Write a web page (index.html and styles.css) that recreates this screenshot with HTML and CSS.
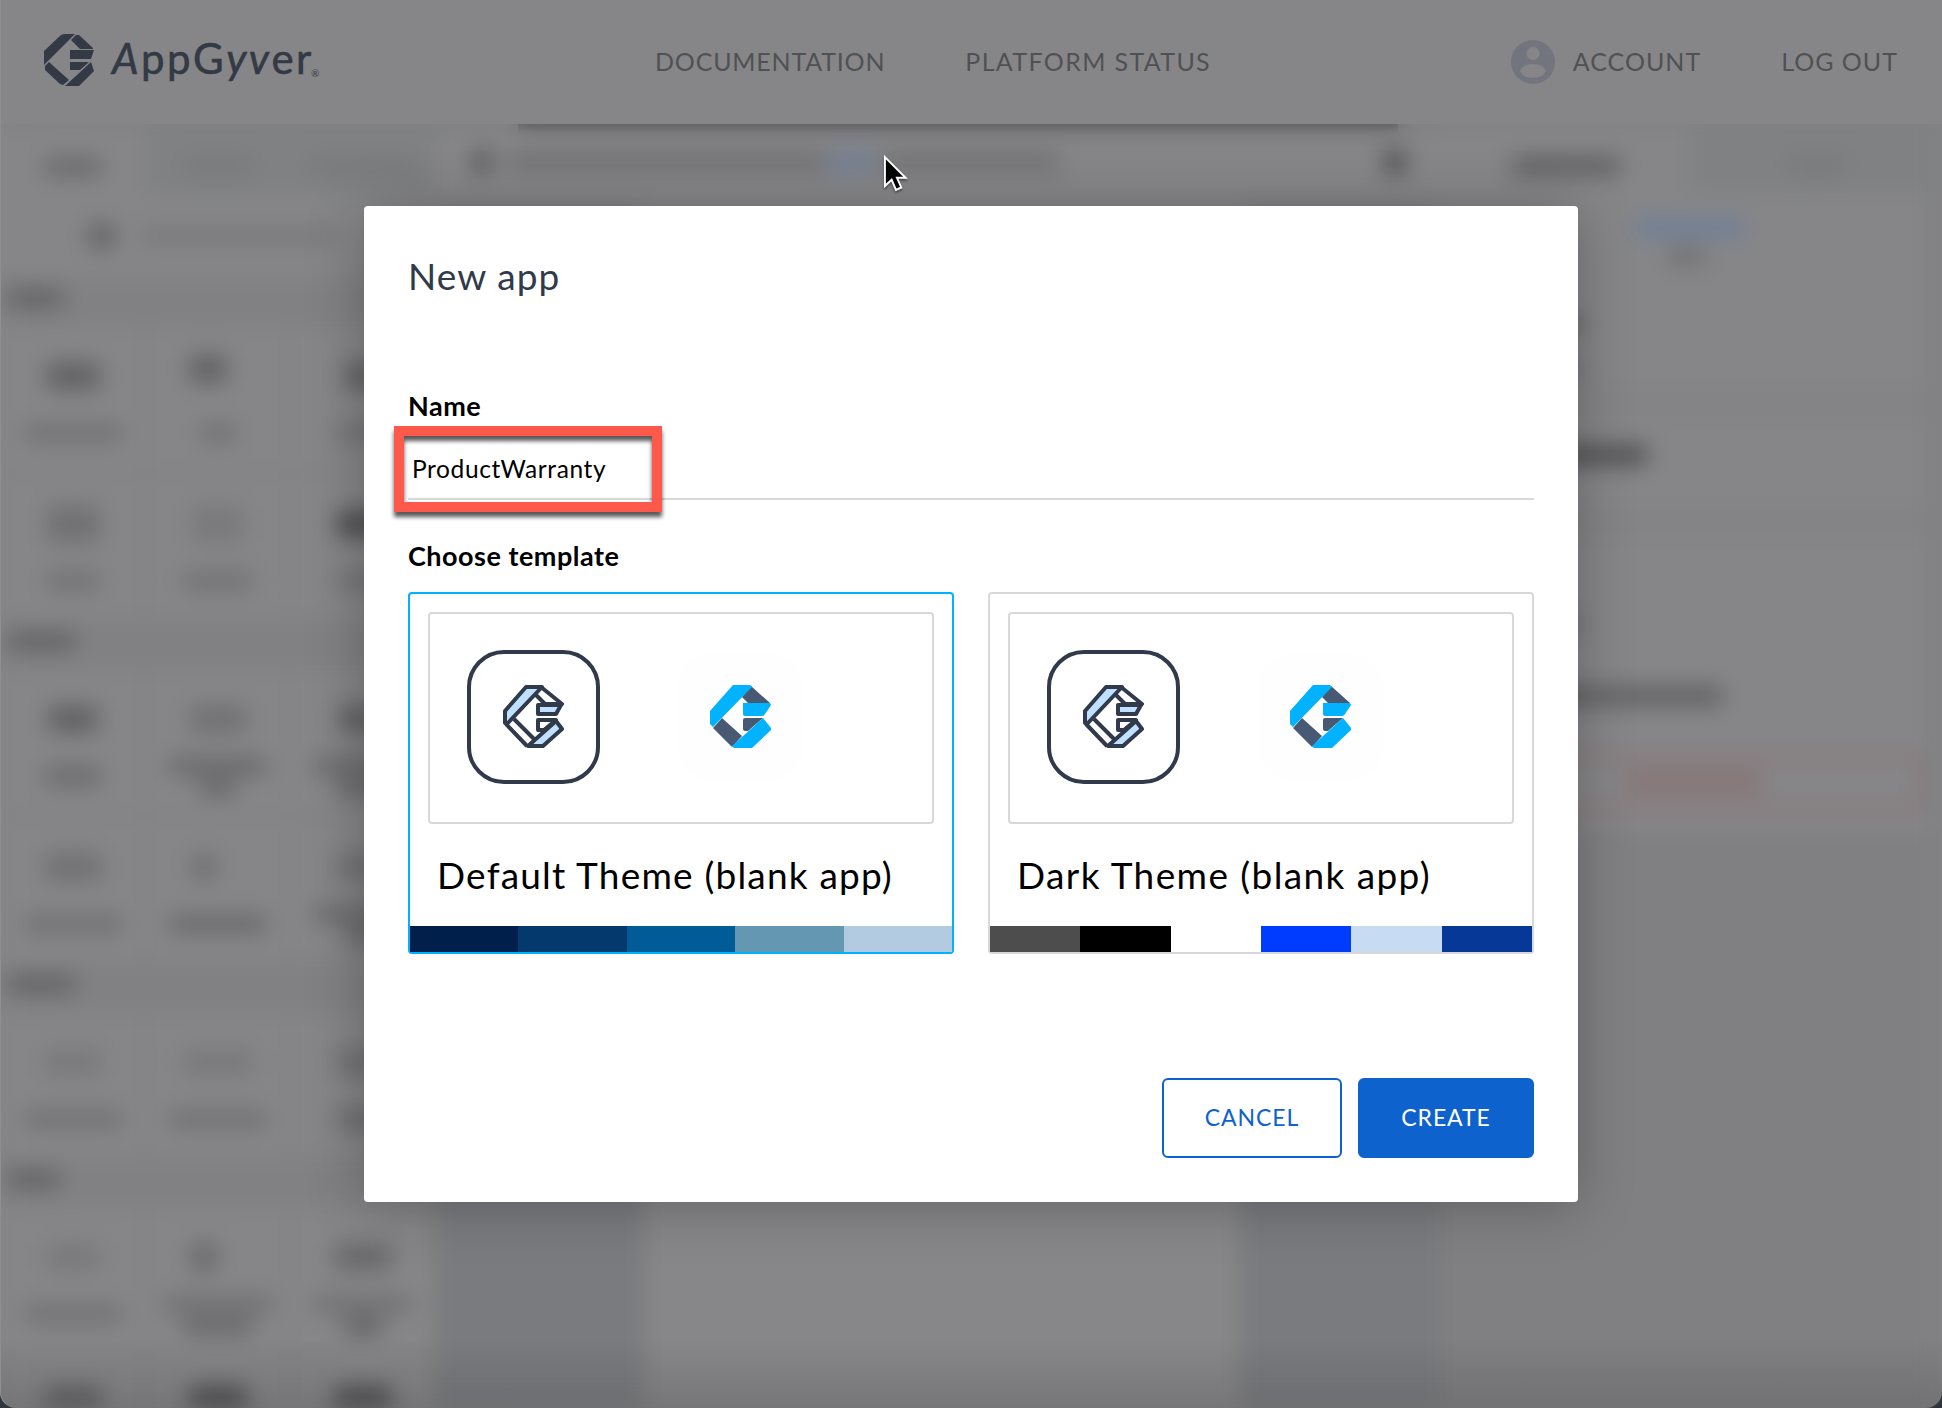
FILE: index.html
```html
<!DOCTYPE html>
<html lang="en">
<head>
<meta charset="utf-8">
<title>AppGyver – New app</title>
<link rel="stylesheet" href="styles.css">
</head>
<body>
<svg class="defs" aria-hidden="true">
  <symbol id="mark-color" viewBox="0 0 61 63">
    <path fill="#485a73" d="M41 1 60 18H38L32 12ZM12 33 32 51 22 62 3 43ZM33 35Q33 33 35 33H53L38 46H35Q33 46 33 44Z"/>
    <path fill="#00b2ff" d="M0 26 23 0H40L42 2 3 42 0 39ZM33 18H60L61 20 55 29Q54 31 52 31H35Q33 31 33 29ZM53 33 61 43V45L42 63H24L22 61Z"/>
  </symbol>
  <symbol id="mark-outline" viewBox="0 0 61 63">
    <g stroke="#313a4b" stroke-width="4" stroke-linejoin="round" fill="none">
      <path d="M38 2 59 19H42L33 10M11 34 31 54M3 39 24 61"/>
      <path fill="#bfe0ff" d="M2 26 23 2H39L4 39 2 38Z"/>
      <path fill="#bfe0ff" d="M35 20H58L53 29H35Z"/>
      <path d="M35 35H53L41 45H35Z"/>
      <path fill="#bfe0ff" d="M53 36 59 44 40 61H25Z"/>
    </g>
  </symbol>
</svg>

<header class="topbar">
  <a class="brand">
    <svg class="brand-mark" viewBox="0 0 50 52"><path d="M0 17 17 1 20 0H31L0 31ZM27 6 32 1H35L49 14V15H36ZM26 16H50L47 25H26ZM26 28H45L36 36H26ZM47 28 50 37 35 52H21ZM1 32 5 28 25 46 19 51 16 50 1 36Z"/></svg>
    <span class="brand-name"><i>A</i>ppG<i>y</i><i>v</i>er</span><span class="reg">®</span>
  </a>
  <nav class="links"><a class="docs">DOCUMENTATION</a><a class="status">PLATFORM STATUS</a></nav>
  <nav class="user">
    <a class="account"><svg class="avatar" viewBox="0 0 44 44"><circle cx="22" cy="22" r="22"/><circle class="hole" cx="22" cy="13.500" r="6.500"/><path class="hole" d="M9 31Q12 24 22 24T35 31Q32 38 22 38T9 31Z"/></svg><span>ACCOUNT</span></a>
    <a>LOG OUT</a>
  </nav>
</header>

<main class="editor" aria-hidden="true">
  <aside class="palette">
    <div class="tabs"><span class="tab on"><i class="s w60 d2"></i></span><span class="tab"><i class="s w70"></i></span><span class="tab"><i class="s w110"></i></span></div>
    <div class="search"><i class="s w26 h24 d3"></i><i class="s w200"></i></div>
    <div class="group"><i class="s w60 d3"></i></div>
    <div class="tiles">
      <div class="tile"><i class="s w56 h28 d3"></i><i class="s w100 d1"></i></div>
      <div class="tile"><i class="s w36 h28 d3 up"></i><i class="s w36 d1"></i></div>
      <div class="tile"><i class="s w36 h28 d3"></i><i class="s w56 d1"></i></div>
      <div class="tile"><i class="s w56 h40 d1"></i><i class="s w56 d1"></i></div>
      <div class="tile"><i class="s w56 h40"></i><i class="s w70 d1"></i></div>
      <div class="tile"><i class="s w56 h28 d4"></i><i class="s w56 d1"></i></div>
    </div>
    <div class="group"><i class="s w70 d3"></i></div>
    <div class="tiles">
      <div class="tile"><i class="s w50 h28 d3"></i><i class="s w60 d2"></i></div>
      <div class="tile"><i class="s w60 h28 d1"></i><i class="s w100 d2 first"></i><i class="s w36 d2 second"></i></div>
      <div class="tile"><i class="s w50 h28 d3"></i><i class="s w100 d2 first"></i><i class="s w56 d2 second"></i></div>
      <div class="tile"><i class="s w60 h28 d1"></i><i class="s w100 d1"></i></div>
      <div class="tile"><i class="s w26 h28 d1 left"></i><i class="s w100 d2"></i></div>
      <div class="tile"><i class="s w56 h28 d1"></i><i class="s w100 d2 first"></i><i class="s w36 d2 second"></i></div>
    </div>
    <div class="group"><i class="s w70 d3"></i></div>
    <div class="tiles">
      <div class="tile"><i class="s w60 h28"></i><i class="s w100 d1"></i></div>
      <div class="tile"><i class="s w70 h28"></i><i class="s w100 d1"></i></div>
      <div class="tile"><i class="s w56 h28 d1"></i><i class="s w56 d2"></i></div>
    </div>
    <div class="group"><i class="s w56 d3"></i></div>
    <div class="tiles">
      <div class="tile"><i class="s w56 h28"></i><i class="s w100 d1"></i></div>
      <div class="tile"><i class="s w26 h28 d2 left"></i><i class="s w110 d1 first"></i><i class="s w70 d2 second"></i></div>
      <div class="tile"><i class="s w60 h28 d2"></i><i class="s w100 d1 first"></i><i class="s w36 d3 second"></i></div>
      <div class="tile"><i class="s w60 h40 d3"></i></div>
      <div class="tile"><i class="s w60 h40 d4"></i></div>
      <div class="tile"><i class="s w60 h40 d4"></i></div>
    </div>
  </aside>
  <section class="stage">
    <div class="strip"></div>
    <div class="crumbs"><i class="s w16 h24 d4"></i><i class="s w310 d1"></i><i class="s w50 blue"></i><i class="s w160 d1"></i><i class="s w20 h24 d4 end"></i></div>
    <div class="canvas"><div class="phone"></div></div>
  </section>
  <aside class="props">
    <div class="tabs"><span class="tab on"><i class="s w110 h20 d3"></i></span><span class="tab"><i class="s w60"></i></span></div>
    <div class="sheet">
      <i class="s w110 h20 blue r1"></i><i class="s w36 d1 r2"></i>
      <i class="s w150 d3 r3"></i><i class="s w150 d1 r4"></i>
      <div class="band"></div>
      <i class="s w210 h20 d4 r5"></i>
      <div class="band b2"></div>
      <i class="s w150 d1 r6"></i>
      <i class="s w290 h20 d3 r7"></i>
      <div class="danger"><i class="s w140 h24 red"></i></div>
    </div>
  </aside>
</main>
<div class="strip-shadow"></div>
<div class="shade"></div>
<div class="corner"></div>

<div class="overlay">
  <section class="modal">
    <h1>New app</h1>
    <div class="lbl">Name</div>
    <div class="field">ProductWarranty<div class="callout"></div></div>
    <div class="lbl">Choose template</div>
    <div class="cards">
      <article class="card selected">
        <div class="preview"><span class="app-icon"><svg class="mark"><use href="#mark-outline"/></svg></span><span class="app-icon plain"><svg class="mark"><use href="#mark-color"/></svg></span></div>
        <h2>Default Theme (blank app)</h2>
        <div class="swatches"><i class="c-a1"></i><i class="c-a2"></i><i class="c-a3"></i><i class="c-a4"></i><i class="c-a5"></i></div>
      </article>
      <article class="card">
        <div class="preview"><span class="app-icon"><svg class="mark"><use href="#mark-outline"/></svg></span><span class="app-icon plain"><svg class="mark"><use href="#mark-color"/></svg></span></div>
        <h2 class="dark-title">Dark Theme (blank app)</h2>
        <div class="swatches"><i class="c-b1"></i><i class="c-b2"></i><i class="c-b3"></i><i class="c-b4"></i><i class="c-b5"></i><i class="c-b6"></i></div>
      </article>
    </div>
    <footer class="actions"><button class="btn">CANCEL</button><button class="btn primary">CREATE</button></footer>
  </section>
</div>
<svg class="cursor" viewBox="0 0 26 38"><path d="M2 2V32L9 25.500 13.500 36 19 33.500 14.500 23.500H23.500Z"/></svg>
</body>
</html>
```
FILE: styles.css
```css
* { box-sizing: border-box; }

body {
  margin: 0;
  width: 1942px;
  height: 1408px;
  overflow: hidden;
  position: relative;
  background: #858587;
  font-family: Lato, "Liberation Sans", sans-serif;
  color: #000;
}

.defs { position: absolute; width: 0; height: 0; }
h1, h2 { margin: 0; font-weight: 400; }

/* Top navigation */
.topbar {
  position: relative;
  z-index: 2;
  display: flex;
  align-items: center;
  height: 124px;
  padding: 0 44px;
  background: #868688;
  color: #505154;
  font-size: 25px;
  line-height: 30px;
  letter-spacing: 1px;
}
.brand { display: flex; width: 611px; align-items: center; color: #333a45; padding-bottom: 4px; }
.brand-mark { width: 50px; height: 52px; fill: #333a45; }
.brand-name { margin-left: 18px; padding-bottom: 4px; font-size: 42px; letter-spacing: 2.5px; line-height: 48px; -webkit-text-stroke: .6px #333a45; }
.reg { font-size: 10px; align-self: flex-end; letter-spacing: 0; line-height: 26px; margin-left: -3px; }
.links { display: flex; gap: 80px; padding-bottom: 2px; }
.docs { letter-spacing: .8px; }
.status { letter-spacing: 1.35px; }
.user { display: flex; margin-left: auto; gap: 80px; align-items: center; }
.user > a:last-child, .account span { padding-bottom: 2px; }
.account { display: flex; align-items: center; gap: 18px; }
.avatar { width: 44px; height: 44px; fill: #72757e; }
.avatar .hole { fill: #868688; }

/* Out-of-focus editor behind the dialog */
.editor {
  position: absolute;
  z-index: 1;
  inset: 104px 0 0;
  padding-top: 20px;
  display: grid;
  grid-template-columns: 436px 1004px 502px;
  grid-template-rows: 1284px;
  overflow: hidden;
  background: #7f7f81;
  filter: blur(11px);
}
.s { display: block; flex: none; height: 18px; width: 60px; background: #7a7a7c; border-radius: 6px; }
.w16 { width: 16px; } .w20 { width: 22px; } .w26 { width: 26px; } .w36 { width: 38px; } .w50 { width: 50px; }
.w56 { width: 54px; } .w60 { width: 58px; } .w70 { width: 70px; } .w100 { width: 98px; } .w110 { width: 110px; }
.w140 { width: 138px; } .w150 { width: 142px; } .w160 { width: 180px; } .w200 { width: 200px; } .w210 { width: 208px; } .w290 { width: 283px; } .w310 { width: 320px; }
.h20 { height: 20px; } .h24 { height: 24px; } .h28 { height: 28px; } .h40 { height: 38px; }
.d1 { background: #717173; } .d2 { background: #69696b; } .d3 { background: #626264; } .d4 { background: #505052; }
.blue { background: #707f96; } .red { background: #887577; }
.tabs { display: flex; height: 70px; }
.tab { display: flex; align-items: center; justify-content: center; flex: 1; padding-top: 16px; background: #808183; }
.tab.on { background: #868688; }
.palette { overflow: hidden; }
.search { display: flex; gap: 26px; align-items: center; height: 84px; padding-left: 88px; background: #868688; }
.group { display: flex; align-items: center; height: 47px; padding: 0 0 8px 6px; background: #818183; }
.tiles { display: grid; grid-template-columns: repeat(3, 145px); }
.tile {
  display: flex; flex-direction: column; align-items: center;
  height: 148px; padding-top: 33px;
  border: 4px solid #838385;
  background: #868688;
}
.tile .s:first-child { margin-bottom: 34px; }
.tile .h40:first-child { margin: -5px 0 29px; }
.tile .up { position: relative; top: -7px; left: -10px; }
.tile .left { position: relative; left: -14px; }
.tile .first { margin-top: -10px; }
.tile .second { margin-top: 4px; }
.stage { display: flex; flex-direction: column; background: #7a7b7f; }
.strip { height: 4px; width: 880px; margin-left: 84px; background: #3c3c42; box-shadow: 0 -16px #3c3c42; }
.crumbs { display: flex; align-items: center; height: 80px; padding: 0 34px 12px 38px; background: #868688; }
.crumbs .w310 { margin-left: 16px; }
.crumbs .w160 { margin-left: 4px; }
.crumbs .end { margin-left: auto; }
.canvas { flex: 1; display: flex; justify-content: center; }
.phone { width: 596px; background: #878789; margin-left: 8px; }
.props { background: #808082; }
.props .tabs { height: 68px; }
.sheet { display: flex; flex-direction: column; height: 638px; margin-right: 16px; background: #868688; }
.r1 { margin: 26px 0 0 194px; }
.r2 { margin: 10px 0 0 228px; }
.r3 { margin-top: 50px; }
.r4 { margin-top: 27px; }
.band { height: 38px; margin-top: 6px; background: #848486; }
.r5 { margin-top: 22px; }
.b2 { margin-top: 38px; }
.r6 { margin-top: 74px; }
.r7 { margin-top: 53px; }
.danger { display: flex; align-items: center; padding-left: 176px; margin-top: 46px; height: 60px; border: 9px solid #88797b; border-radius: 6px; }
.strip-shadow { position: absolute; z-index: 1; left: 518px; top: 124px; width: 880px; height: 10px; background: linear-gradient(rgba(60, 60, 68, .25), transparent); }
.shade { position: absolute; z-index: 2; inset: auto 0 0; height: 70px; background: linear-gradient(transparent, rgba(0, 0, 0, .12)); }
.corner { position: absolute; z-index: 3; inset: 0; border-radius: 0 0 16px 16px; box-shadow: 0 0 0 20px #30343c; border-left: 1px solid #8e8f91; }

/* Dialog */
.overlay { position: absolute; z-index: 4; inset: 0; display: flex; justify-content: center; align-items: flex-start; padding-top: 206px; }
.modal {
  width: 1214px; height: 996px;
  padding: 44px;
  display: flex; flex-direction: column;
  background: #fff;
  border-radius: 4px;
  box-shadow: 0 4px 56px rgba(0, 0, 0, .25);
}
.modal h1 { height: 138px; line-height: 52px; font-size: 37px; letter-spacing: 1.1px; color: #313a4b; }
.lbl { font-size: 27px; font-weight: 700; line-height: 36px; letter-spacing: .5px; }
.field { position: relative; height: 76px; padding: 10px 0 0 4px; border-bottom: 2px solid #d7d7dc; font-size: 24.5px; line-height: 70px; letter-spacing: .6px; }
.callout { position: absolute; left: -14px; top: 2px; width: 268px; height: 86px; border: 10px solid #ff594c; filter: drop-shadow(0 5px 2px rgba(0, 0, 0, .65)); }
.field + .lbl { margin-top: 38px; }
.cards { display: grid; grid-template-columns: 546px 546px; gap: 34px; margin-top: 18px; }
.card { height: 362px; display: flex; flex-direction: column; border: 2px solid #d7d7dc; border-radius: 4px; }
.card.selected { border-color: #00b2ff; }
.preview { display: flex; flex: none; gap: 74px; height: 212px; margin: 18px 18px 0; padding: 36px 37px; border: 2px solid #d7d7dc; border-radius: 4px; }
.app-icon { display: flex; align-items: center; justify-content: center; width: 133px; height: 134px; padding: 0 1px 2px 0; border: 4px solid #313a4b; border-radius: 37px; }
.app-icon.plain { border-color: #fff; background: #fefefe; background-clip: padding-box; }
.mark { width: 61px; height: 63px; }
.card h2 { flex: none; height: 102px; padding-left: 27px; font-size: 37px; line-height: 101px; letter-spacing: 1.2px; white-space: nowrap; }
.card .dark-title { letter-spacing: 1.4px; }
.swatches { display: flex; flex: none; height: 26px; }
.swatches i { flex: 1; }
.c-a1 { background: #001f4b; } .c-a2 { background: #03396c; } .c-a3 { background: #005b96; } .c-a4 { background: #6497b1; } .c-a5 { background: #b3cbe0; }
.c-b1 { background: #4d4d4d; } .c-b2 { background: #000; } .c-b3 { background: #fff; } .c-b4 { background: #003cff; } .c-b5 { background: #c7dcf2; } .c-b6 { background: #063898; }
.actions { display: flex; justify-content: flex-end; gap: 16px; margin-top: auto; }
.btn { width: 180px; height: 80px; padding: 0 0 2px; border: 2px solid #0d62ce; border-radius: 6px; background: #fff; color: #0d62ce; font: 400 23px Lato, "Liberation Sans", sans-serif; letter-spacing: .9px; }
.btn.primary { width: 176px; background: #0d62ce; color: #fff; }

.cursor { position: absolute; z-index: 5; left: 883px; top: 155px; width: 25px; height: 37px; fill: #000; stroke: #fff; stroke-width: 2; filter: drop-shadow(0 2px 1px rgba(0, 0, 0, .4)); }
```
